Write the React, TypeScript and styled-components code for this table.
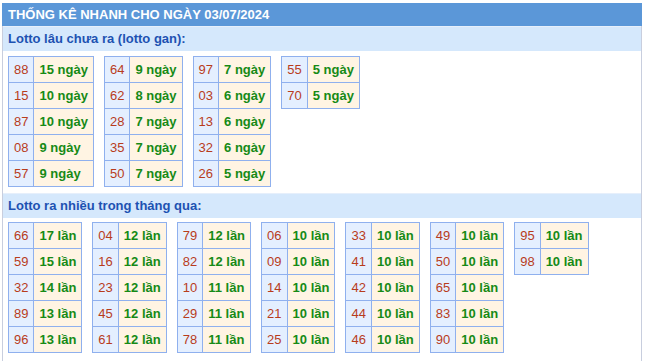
import React from "react";
import styled, { createGlobalStyle } from "styled-components";

const Global = createGlobalStyle`
  html, body { margin: 0; padding: 0; background: #ffffff; }
  body { font-family: "Liberation Sans", Arial, sans-serif; }
`;

const Page = styled.div`
  padding: 3px 4px 0 2px;
`;

const Box = styled.div`
  width: 640px;
`;

const Title = styled.div`
  height: 23px;
  background: #5b97d8;
  color: #ffffff;
  font-weight: bold;
  font-size: 13px;
  line-height: 23px;
  padding-left: 6px;
`;

const Body = styled.div`
  border-left: 1px solid #c8cede;
  border-right: 1px solid #c8cede;
`;

const SubHeader = styled.div`
  height: 24px;
  line-height: 24px;
  background: #d5e8fc;
  color: #1d52b2;
  font-weight: bold;
  font-size: 13px;
  padding-left: 5px;
  border-top: 1px solid #e6effb;
`;

const Tables = styled.div<{ $top: number; $bottom: number }>`
  display: flex;
  flex-wrap: wrap;
  align-items: flex-start;
  gap: 10px;
  padding: ${(p) => p.$top}px 5px ${(p) => p.$bottom}px 5px;
`;

const Table = styled.table`
  border-collapse: collapse;
  font-size: 13px;
  line-height: 15px;
`;

const NumCell = styled.td`
  border: 1px solid #8fb0ee;
  background: #e4efff;
  color: #b83c1c;
  padding: 5px 5px;
  text-align: center;
`;

const ValCell = styled.td`
  border: 1px solid #8fb0ee;
  background: #fff4e3;
  color: #168a16;
  font-weight: bold;
  padding: 5px 5px;
  white-space: nowrap;
`;

type Item = [string, string];

const gan: Item[][] = [
  [["88", "15"], ["15", "10"], ["87", "10"], ["08", "9"], ["57", "9"]],
  [["64", "9"], ["62", "8"], ["28", "7"], ["35", "7"], ["50", "7"]],
  [["97", "7"], ["03", "6"], ["13", "6"], ["32", "6"], ["26", "5"]],
  [["55", "5"], ["70", "5"]],
];

const nhieu: Item[][] = [
  [["66", "17"], ["59", "15"], ["32", "14"], ["89", "13"], ["96", "13"]],
  [["04", "12"], ["16", "12"], ["23", "12"], ["45", "12"], ["61", "12"]],
  [["79", "12"], ["82", "12"], ["10", "11"], ["29", "11"], ["78", "11"]],
  [["06", "10"], ["09", "10"], ["14", "10"], ["21", "10"], ["25", "10"]],
  [["33", "10"], ["41", "10"], ["42", "10"], ["44", "10"], ["46", "10"]],
  [["49", "10"], ["50", "10"], ["65", "10"], ["83", "10"], ["90", "10"]],
  [["95", "10"], ["98", "10"]],
];

function Group({ groups, unit }: { groups: Item[][]; unit: string }) {
  return (
    <>
      {groups.map((g, i) => (
        <Table key={i}>
          <tbody>
            {g.map(([n, v]) => (
              <tr key={n}>
                <NumCell>{n}</NumCell>
                <ValCell>
                  {v} {unit}
                </ValCell>
              </tr>
            ))}
          </tbody>
        </Table>
      ))}
    </>
  );
}

export default function App() {
  return (
    <Page>
      <Global />
      <Box>
        <Title>THỐNG KÊ NHANH CHO NGÀY 03/07/2024</Title>
        <Body>
          <SubHeader>Lotto lâu chưa ra (lotto gan):</SubHeader>
          <Tables $top={5} $bottom={6}>
            <Group groups={gan} unit="ngày" />
          </Tables>
          <SubHeader>Lotto ra nhiều trong tháng qua:</SubHeader>
          <Tables $top={4} $bottom={8}>
            <Group groups={nhieu} unit="lần" />
          </Tables>
        </Body>
      </Box>
    </Page>
  );
}
